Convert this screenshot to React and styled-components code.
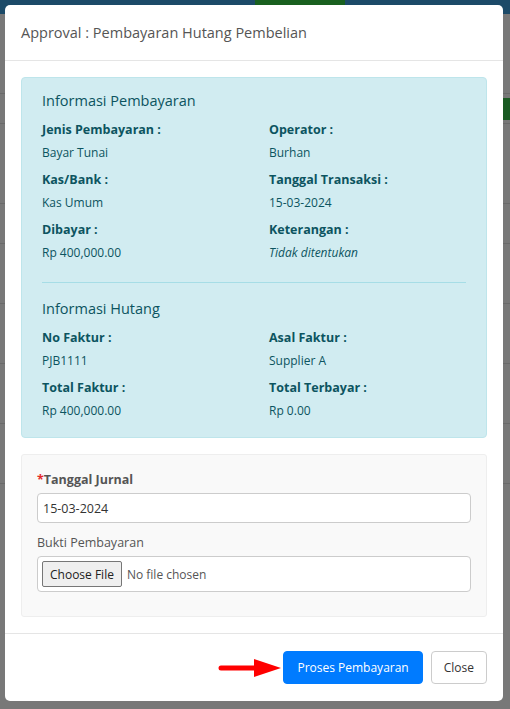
import React from "react";
import styled, { createGlobalStyle } from "styled-components";

const Global = createGlobalStyle`
  html, body { margin: 0; padding: 0; }
  body { font-family: "Open Sans", "Liberation Sans", sans-serif; background: #777; }
  * { box-sizing: border-box; }
`;

const Page = styled.div`
  position: relative;
  width: 510px;
  height: 709px;
  overflow: hidden;
  background: #787878;
`;

const NavBar = styled.div`
  display: flex;
  height: 14px;
  background: #1c4a68;
`;

const NavItem = styled.div`
  width: ${(p) => p.w}px;
  background: ${(p) => (p.green ? "#19601f" : "transparent")};
`;

const BgRows = styled.div`
  display: flex;
  flex-direction: column;
`;

const BgLine = styled.div`
  height: ${(p) => p.h}px;
  border-bottom: 1px solid #6a6a6a;
  display: flex;
  justify-content: flex-end;
  align-items: center;
`;

const BgGreen = styled.div`
  width: 8px;
  height: 22px;
  background: #1a5a22;
`;

const Backdrop = styled.div`
  position: absolute;
  inset: 0;
  display: flex;
  justify-content: flex-start;
  padding: 5px 0 0 5px;
`;

const Modal = styled.div`
  width: 498px;
  height: 696px;
  background: #fff;
  border-radius: 5px;
  display: flex;
  flex-direction: column;
`;

const Header = styled.div`
  height: 56px;
  display: flex;
  align-items: center;
  padding: 0 16px;
  border-bottom: 1px solid #e5e5e5;
`;

const Title = styled.h4`
  margin: 0;
  font-size: 14.5px;
  font-weight: 400;
  color: #555;
`;

const Body = styled.div`
  padding: 16px;
  display: flex;
  flex-direction: column;
  gap: 16px;
  border-bottom: 1px solid #e5e5e5;
`;

const Alert = styled.div`
  background: #d1ecf1;
  border: 1px solid #bee5eb;
  border-radius: 4px;
  color: #0c5460;
  padding: 12px 20px 9px;
`;

const SectionTitle = styled.div`
  font-size: 14.5px;
  line-height: 22px;
  margin-bottom: 8px;
`;

const Grid = styled.div`
  display: grid;
  grid-template-columns: 227px 1fr;
`;

const Field = styled.div`
  display: flex;
  flex-direction: column;
  height: 50px;
`;

const Label = styled.div`
  font-size: 12.5px;
  font-weight: 700;
  line-height: 20px;
`;

const Value = styled.div`
  font-size: 12px;
  line-height: 26px;
  font-style: ${(p) => (p.italic ? "italic" : "normal")};
`;

const Divider = styled.hr`
  border: 0;
  border-top: 1px solid #a6dde6;
  margin: 12px 0 15px;
`;

const FormCard = styled.div`
  background: #f9f9f9;
  border: 1px solid #eeeeee;
  border-radius: 3px;
  padding: 15px 15px 24px;
  display: flex;
  flex-direction: column;
`;

const FormLabel = styled.label`
  font-size: 12.5px;
  line-height: 20px;
  font-weight: ${(p) => (p.bold ? 700 : 400)};
  color: #555;
  margin-bottom: 3px;
`;

const Req = styled.span`
  color: #e52b2b;
`;

const TextInput = styled.div`
  height: 30px;
  border: 1px solid #ccc;
  border-radius: 4px;
  background: #fff;
  font-size: 12.5px;
  color: #333;
  display: flex;
  align-items: center;
  padding: 0 5px;
  margin-bottom: 10px;
`;

const FileInput = styled.div`
  height: 36px;
  border: 1px solid #ccc;
  border-radius: 4px;
  background: #fff;
  display: flex;
  align-items: center;
  gap: 5px;
  padding: 0 4px;
  font-size: 12px;
  color: #555;
`;

const FileBtn = styled.div`
  height: 26px;
  padding: 0 7px;
  border: 1px solid #767676;
  border-radius: 2px;
  background: #efefef;
  color: #222;
  display: flex;
  align-items: center;
`;

const Footer = styled.div`
  flex: 1;
  display: flex;
  justify-content: flex-end;
  align-items: flex-start;
  padding: 17px 16px 0;
  gap: 8px;
`;

const Arrow = styled.svg`
  margin-top: 8px;
  margin-right: -7px;
`;

const Button = styled.button`
  height: 33px;
  padding: 0 ${(p) => (p.primary ? 13 : 12)}px;
  font-family: inherit;
  font-size: 12px;
  border-radius: 4px;
  border: 1px solid ${(p) => (p.primary ? "#007bff" : "#ccc")};
  background: ${(p) => (p.primary ? "#007bff" : "#fff")};
  color: ${(p) => (p.primary ? "#fff" : "#333")};
`;

const pembayaran = [
  ["Jenis Pembayaran :", "Bayar Tunai"],
  ["Operator :", "Burhan"],
  ["Kas/Bank :", "Kas Umum"],
  ["Tanggal Transaksi :", "15-03-2024"],
  ["Dibayar :", "Rp 400,000.00"],
  ["Keterangan :", "Tidak ditentukan", true],
];

const hutang = [
  ["No Faktur :", "PJB1111"],
  ["Asal Faktur :", "Supplier A"],
  ["Total Faktur :", "Rp 400,000.00"],
  ["Total Terbayar :", "Rp 0.00"],
];

const Fields = ({ items }) => (
  <Grid>
    {items.map(([l, v, it]) => (
      <Field key={l}>
        <Label>{l}</Label>
        <Value italic={it}>{v}</Value>
      </Field>
    ))}
  </Grid>
);

export default function App() {
  return (
    <Page>
      <Global />
      <NavBar>
        <NavItem w={255} />
        <NavItem w={90} green />
      </NavBar>
      <BgRows>
        <BgLine h={80} />
        <BgLine h={30}>
          <BgGreen />
        </BgLine>
        <BgLine h={80} />
        <BgLine h={40} />
        <BgLine h={60} />
        <BgLine h={60} />
        <BgLine h={60} />
        <BgLine h={60} />
      </BgRows>
      <Backdrop>
        <Modal>
          <Header>
            <Title>Approval : Pembayaran Hutang Pembelian</Title>
          </Header>
          <Body>
            <Alert>
              <SectionTitle>Informasi Pembayaran</SectionTitle>
              <Fields items={pembayaran} />
              <Divider />
              <SectionTitle>Informasi Hutang</SectionTitle>
              <Fields items={hutang} />
            </Alert>
            <FormCard>
              <FormLabel bold>
                <Req>*</Req>Tanggal Jurnal
              </FormLabel>
              <TextInput>15-03-2024</TextInput>
              <FormLabel>Bukti Pembayaran</FormLabel>
              <FileInput>
                <FileBtn>Choose File</FileBtn>
                No file chosen
              </FileInput>
            </FormCard>
          </Body>
          <Footer>
            <Arrow width="64" height="18" viewBox="0 0 64 18">
              <line x1="3" y1="9" x2="40" y2="9" stroke="#f00" strokeWidth="5" strokeLinecap="round" />
              <polygon points="36,0 63,9 36,18" fill="#f00" />
            </Arrow>
            <Button primary>Proses Pembayaran</Button>
            <Button>Close</Button>
          </Footer>
        </Modal>
      </Backdrop>
    </Page>
  );
}
